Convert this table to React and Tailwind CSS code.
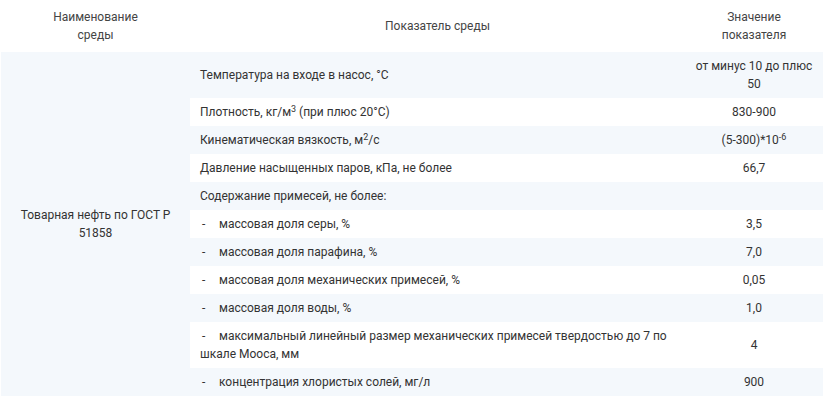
import React from "react";

const rows = [
  { p: <>Температура на входе в насос, °C</>, v: <>от минус 10 до плюс 50</> },
  { p: <>Плотность, кг/м<sup>3</sup> (при плюс 20°C)</>, v: <>830-900</> },
  { p: <>Кинематическая вязкость, м<sup>2</sup>/с</>, v: <>(5-300)*10<sup>-6</sup></> },
  { p: <>Давление насыщенных паров, кПа, не более</>, v: <>66,7</> },
  { p: <>Содержание примесей, не более:</>, v: null },
  { d: true, p: <>массовая доля серы, %</>, v: <>3,5</> },
  { d: true, p: <>массовая доля парафина, %</>, v: <>7,0</> },
  { d: true, p: <>массовая доля механических примесей, %</>, v: <>0,05</> },
  { d: true, p: <>массовая доля воды, %</>, v: <>1,0</> },
  { d: true, p: <>максимальный линейный размер механических примесей твердостью до 7 по шкале Мооса, мм</>, v: <>4</> },
  { d: true, p: <>концентрация хлористых солей, мг/л</>, v: <>900</> },
];

export default function App() {
  return (
    <div className="w-[825px] h-[398px] bg-white overflow-hidden" style={{ fontFamily: "Roboto, 'Liberation Sans', sans-serif" }}>
      <table className="ml-[1px] w-[822px] border-collapse table-fixed text-[12px] leading-[18px] text-[#333]">
        <colgroup>
          <col className="w-[189px]" />
          <col className="w-[495px]" />
          <col className="w-[138px]" />
        </colgroup>
        <thead>
          <tr className="bg-white text-[#444]">
            <th className="font-normal text-center align-middle px-[10px] py-[8px]">Наименование<br />среды</th>
            <th className="font-normal text-center align-middle px-[10px] py-[8px]">Показатель среды</th>
            <th className="font-normal text-center align-middle px-[10px] py-[8px]">Значение показателя</th>
          </tr>
        </thead>
        <tbody>
          {rows.map((r, i) => (
            <tr key={i} className={i % 2 === 0 ? "bg-[#f4f8fc]" : "bg-white"}>
              {i === 0 && (
                <td rowSpan={rows.length} className="bg-[#f4f8fc] text-center align-middle px-[10px] py-[5px]">
                  Товарная нефть по ГОСТ Р 51858
                </td>
              )}
              <td className="text-left align-middle px-[10px] py-[5px]">
                {r.d && <span className="inline-block w-[19px] pl-[2px]">-</span>}
                {r.p}
              </td>
              <td className="text-center align-middle px-[10px] py-[5px]">{r.v}</td>
            </tr>
          ))}
        </tbody>
      </table>
    </div>
  );
}
